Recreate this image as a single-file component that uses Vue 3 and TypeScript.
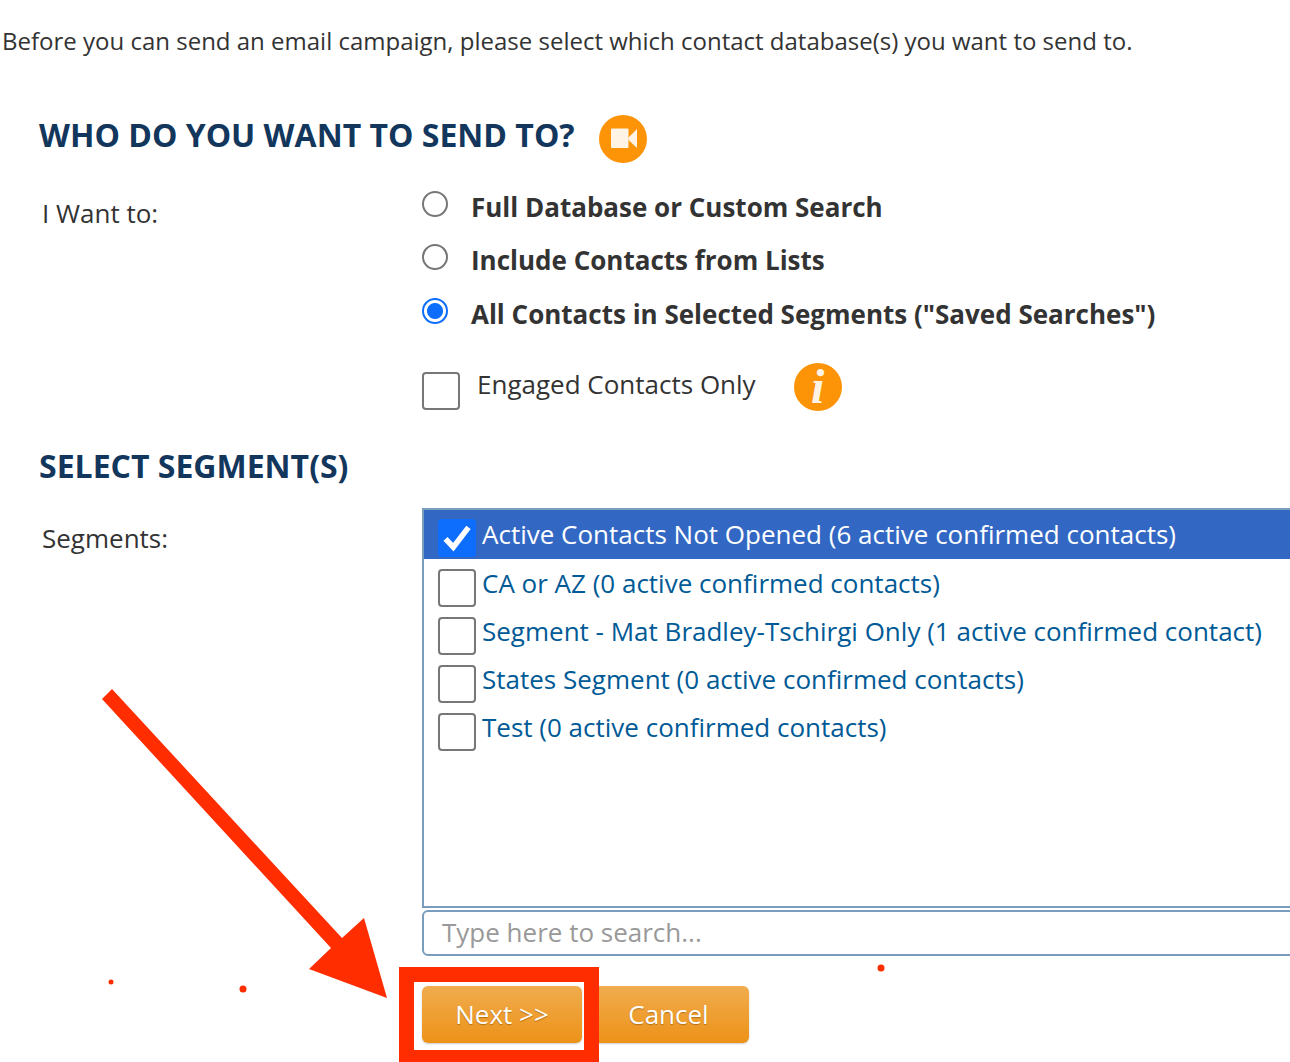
<script setup lang="ts">
import { ref } from 'vue'

interface Segment {
  name: string
  checked: boolean
}

const modes = ref([
  { label: 'Full Database or Custom Search', on: false },
  { label: 'Include Contacts from Lists', on: false },
  { label: 'All Contacts in Selected Segments ("Saved Searches")', on: true },
])

const segments = ref<Segment[]>([
  { name: 'Active Contacts Not Opened (6 active confirmed contacts)', checked: true },
  { name: 'CA or AZ (0 active confirmed contacts)', checked: false },
  { name: 'Segment - Mat Bradley-Tschirgi Only (1 active confirmed contact)', checked: false },
  { name: 'States Segment (0 active confirmed contacts)', checked: false },
  { name: 'Test (0 active confirmed contacts)', checked: false },
])
</script>

<template>
  <div class="page">
    <p class="intro">Before you can send an email campaign, please select which contact database(s) you want to send to.</p>

    <div class="title first">
      <h2>WHO DO YOU WANT TO SEND TO?</h2>
      <svg class="badge video" viewBox="0 0 48 48">
        <circle cx="24" cy="24" r="24" fill="#fd9306" />
        <rect x="12" y="13.500" width="17.500" height="19.500" rx="1" fill="#fff3e6" />
        <path d="M29.500 22.500 38 14v19l-8.500-8z" fill="#fff3e6" />
      </svg>
    </div>

    <div class="form-row want">
      <div class="label">I Want to:</div>
      <div class="options">
        <div v-for="m in modes" :key="m.label" class="radio-row">
          <span class="radio" :class="{ on: m.on }"></span>
          <span class="radio-text">{{ m.label }}</span>
        </div>
        <div class="engaged">
          <span class="box"></span>
          <span class="engaged-text">Engaged Contacts Only</span>
          <span class="info">i</span>
        </div>
      </div>
    </div>

    <div class="title second">
      <h2>SELECT SEGMENT(S)</h2>
    </div>

    <div class="form-row segs">
      <div class="label">Segments:</div>
      <div class="picker">
        <div class="list">
          <div v-for="s in segments" :key="s.name" class="item" :class="{ sel: s.checked }">
            <span class="box" :class="{ on: s.checked }">
              <svg v-if="s.checked" viewBox="0 0 37 37">
                <path d="M6 19.500l8.500 9L31 7" fill="none" stroke="#fff" stroke-width="6" />
              </svg>
            </span>
            <span class="item-text">{{ s.name }}</span>
          </div>
        </div>
        <div class="search">Type here to search...</div>
        <div class="buttons">
          <button class="btn next">Next &gt;&gt;</button>
          <button class="btn cancel">Cancel</button>
        </div>
      </div>
    </div>

    <!-- annotation drawn over the screenshot -->
    <svg class="markup" viewBox="0 0 1290 1062">
      <path d="M102 699 112 689 342 938 364 918 387 998 309 969 331 948z" fill="#ff2d00" />
      <path d="M399 967h200v95h-200zM414 982v68h170v-68z" fill="#ff2d00" fill-rule="evenodd" />
      <circle cx="111" cy="982" r="2.500" fill="#ff2d00" />
      <circle cx="243" cy="989" r="3.500" fill="#ff2d00" />
      <circle cx="881" cy="968" r="3.500" fill="#ff2d00" />
    </svg>
  </div>
</template>

<style>
html, body {
  margin: 0;
  background: #fff;
}
</style>

<style scoped>
.page {
  position: relative;
  width: 1290px;
  height: 1062px;
  overflow: hidden;
  background: #fff;
  font-family: "Open Sans", "Noto Sans", sans-serif;
  color: #333;
  font-size: 26px;
}

.intro {
  margin: 0;
  padding: 23px 0 0 2px;
  font-size: 24px;
  line-height: 36px;
  white-space: nowrap;
}

.title {
  display: flex;
  align-items: flex-start;
  height: 48px;
  padding-left: 39px;
}

.title.first {
  margin-top: 52px;
}

.title.second {
  margin-top: 31px;
}

h2 {
  margin: 0;
  font-size: 32px;
  line-height: 48px;
  font-weight: 700;
  color: #12365c;
  white-space: nowrap;
}

.badge {
  flex: none;
  width: 48px;
  height: 48px;
  margin: 4px 0 0 24px;
}

.form-row {
  display: grid;
  grid-template-columns: 422px 900px;
}

.label {
  padding-left: 42px;
  line-height: 36px;
}

.want {
  margin-top: 33px;
}

.want .label {
  padding-top: 3px;
}

.options {
  display: flex;
  flex-direction: column;
}

.radio-row {
  display: flex;
  align-items: flex-start;
  height: 53.330px;
  white-space: nowrap;
}

.radio {
  box-sizing: border-box;
  width: 26px;
  height: 26px;
  margin-top: -1px;
  border: 2px solid #777;
  border-radius: 50%;
  flex: none;
}

.radio.on {
  border-color: #0d6efd;
  background: radial-gradient(circle, #0d6efd 0 7.500px, #fff 8.500px);
}

.radio-text {
  margin: -3px 0 0 23px;
  font-weight: 700;
  line-height: 36px;
}

.engaged {
  display: flex;
  align-items: flex-start;
  margin-top: 20px;
}

.box {
  box-sizing: border-box;
  display: block;
  flex: none;
  width: 38px;
  height: 38px;
  background: #fff;
  border: 2px solid #777;
  border-radius: 4px;
}

.box.on {
  background: #0d6efd;
  border-color: #0d6efd;
}

.box svg {
  display: block;
  width: 34px;
  height: 34px;
}

.engaged-text {
  margin: -6px 0 0 17px;
  line-height: 36px;
}

.info {
  display: block;
  width: 48px;
  height: 48px;
  margin: -9px 0 0 38px;
  border-radius: 50%;
  background: #fd9306;
  color: #fff3e6;
  font: italic 700 48px/48px "Liberation Serif", serif;
  text-align: center;
}

.segs {
  margin-top: 18px;
}

.segs .label {
  padding-top: 12px;
}

.picker {
  display: flex;
  flex-direction: column;
}

.list {
  box-sizing: border-box;
  height: 400px;
  border: 2px solid #7b9dbd;
}

.item {
  display: flex;
  align-items: flex-start;
  height: 48px;
  padding-left: 14px;
  color: #005a96;
  white-space: nowrap;
}

.item.sel {
  height: 49px;
  background: #3268c4;
  color: #fff;
}

.item .box {
  margin-top: 10px;
}

.item.sel .box {
  margin-top: 9px;
}

.item-text {
  margin-left: 6px;
  line-height: 48px;
}

.search {
  box-sizing: border-box;
  height: 46px;
  margin-top: 2px;
  padding-left: 18px;
  border: 2px solid #7b9dbd;
  border-radius: 6px;
  color: #999;
  line-height: 40px;
}

.buttons {
  display: flex;
  gap: 6px;
  margin-top: 30px;
}

.btn {
  height: 57px;
  padding: 0;
  border: none;
  border-radius: 6px;
  background: linear-gradient(#f0ac4e, #ed9218);
  box-shadow: 0 1px 2px rgba(0, 0, 0, 0.2);
  color: #fff;
  font: 26px "Open Sans", sans-serif;
  text-shadow: 0 1px 1px rgba(120, 70, 0, 0.5);
}

.next {
  width: 160px;
}

.cancel {
  width: 161px;
}

.markup {
  position: absolute;
  left: 0;
  top: 0;
  width: 1290px;
  height: 1062px;
  pointer-events: none;
}
</style>
